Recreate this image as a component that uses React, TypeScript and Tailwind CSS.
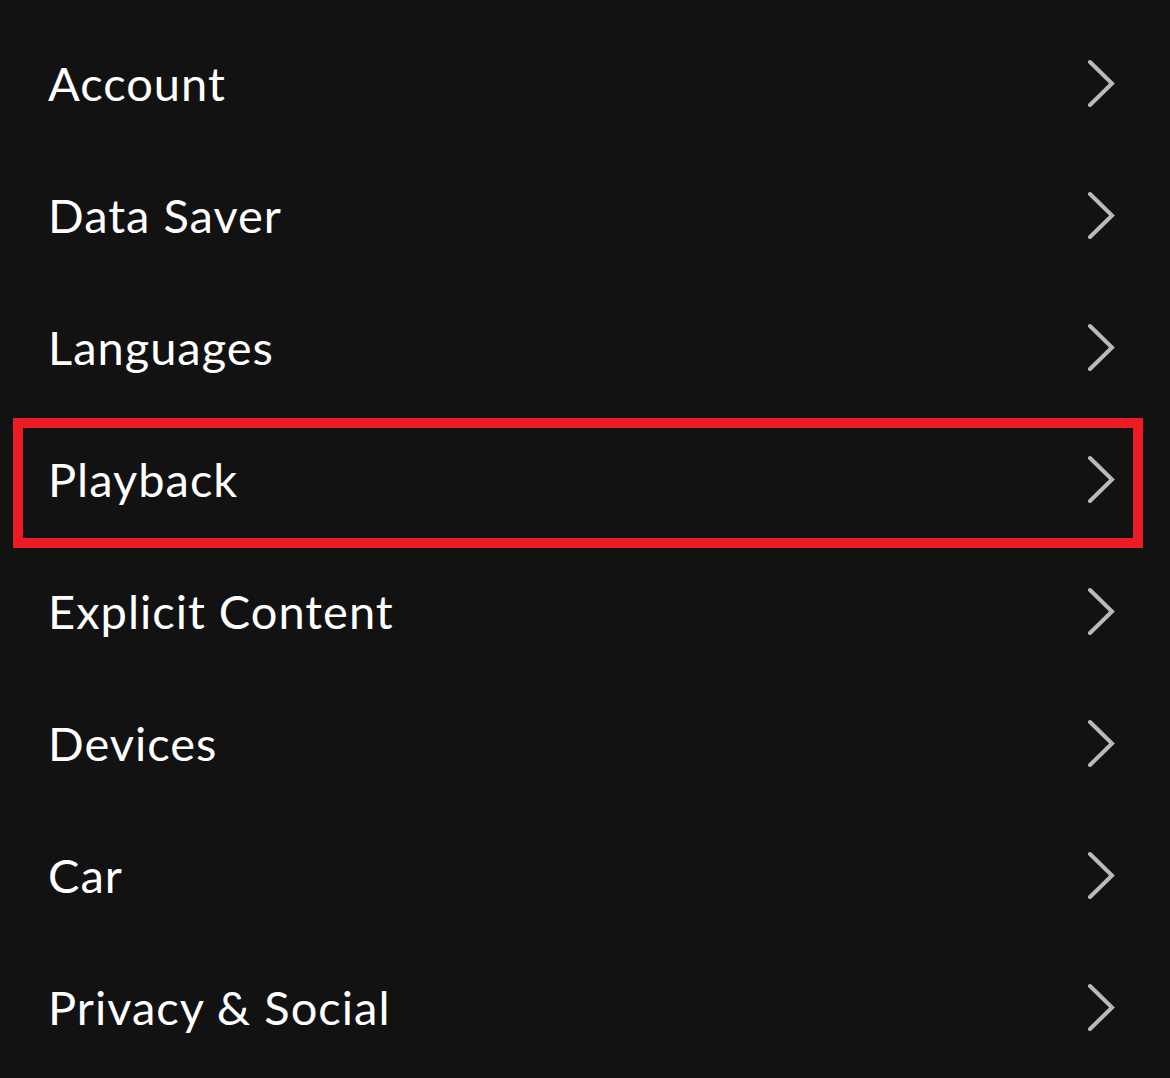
const items = [
  'Account',
  'Data Saver',
  'Languages',
  'Playback',
  'Explicit Content',
  'Devices',
  'Car',
  'Privacy & Social',
];

function Chevron() {
  return (
    <svg width="28" height="48" viewBox="0 0 28 48" fill="none" className="shrink-0">
      <polyline
        points="3,3 25,24.5 3,46"
        stroke="#bababa"
        strokeWidth="4"
        strokeLinecap="round"
        strokeLinejoin="miter"
      />
    </svg>
  );
}

export default function App() {
  return (
    <div className="min-h-screen w-full bg-[#121212] pt-[17px] font-['Lato','Liberation_Sans',sans-serif]">
      {items.map((label) => (
        <div
          key={label}
          className="relative flex h-[132px] items-center justify-between pl-[48px] pr-[55px]"
        >
          <span className="text-[47px] leading-none text-white tracking-[1px]">{label}</span>
          <Chevron />
          {label === 'Playback' && (
            <div className="pointer-events-none absolute left-[13px] right-[27px] top-[5px] bottom-[-3px] border-[10px] border-[#ed1c24]" />
          )}
        </div>
      ))}
    </div>
  );
}
